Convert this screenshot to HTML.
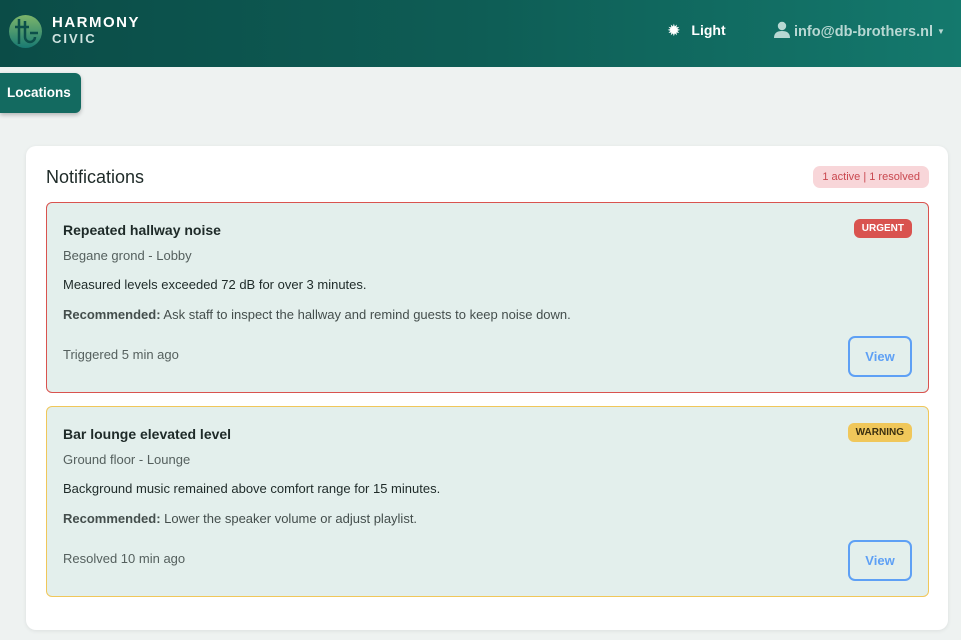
<!DOCTYPE html>
<html><head><style>
*{box-sizing:border-box;margin:0;padding:0}
body{width:961px;height:640px;overflow:hidden;background:#eef2f1;font-family:"Liberation Sans",sans-serif;position:relative;color:#2b3a38}
.hdr{position:absolute;left:0;top:0;width:961px;height:67px;background:linear-gradient(90deg,#0b4c47 0%,#0e5d55 50%,#14796d 100%)}
.logo{position:absolute;left:9px;top:15px;width:33px;height:33px}
.brand{position:absolute;left:52px;top:15px;color:#fff;font-weight:bold;font-size:15px;letter-spacing:1.5px;line-height:16px}
.brand span{display:block;font-size:13px;letter-spacing:2px;color:#cfe3e0;font-weight:bold}
.light{position:absolute;left:668px;top:22px;color:#fff;font-weight:bold;font-size:14px;white-space:nowrap}
.user{position:absolute;left:774px;top:21px;color:#b8d8d3;font-weight:bold;font-size:14.5px;white-space:nowrap}
.loc{position:absolute;left:0;top:73px;width:81px;height:40px;background:#136a60;border-radius:0 6px 6px 0;color:#fff;font-weight:bold;font-size:13.5px;padding:12px 0 0 7px;box-shadow:0 2px 4px rgba(0,0,0,.25)}
.card{position:absolute;left:26px;top:146px;width:922px;height:484px;background:#fff;border-radius:10px;box-shadow:0 1px 4px rgba(0,0,0,.08)}
.ttl{position:absolute;left:20px;top:21px;font-size:18px;color:#1e2a28}
.cnt{position:absolute;right:19px;top:20px;background:#f8d6d9;color:#c9484f;font-size:11px;padding:5px 9px;border-radius:7px}
.al{position:absolute;left:20px;width:883px;height:191px;background:#e3efec;border:1px solid #d9534f;border-radius:6px}
.al.w{border-color:#f0c75a}
.al h3{position:absolute;left:16px;top:19px;font-size:14px;color:#1e2a28}
.al .sub{position:absolute;left:16px;top:45px;font-size:13px;color:#55605e}
.al .m{position:absolute;left:16px;top:74px;font-size:13px;color:#1e2a28}
.al .r{position:absolute;left:16px;top:104px;font-size:13px;color:#444e4c}
.al .t{position:absolute;left:16px;top:144px;font-size:13px;color:#55605e}
.bd{position:absolute;right:16px;top:16px;font-size:10px;font-weight:bold;padding:4px 8px;border-radius:6px}
.v{position:absolute;right:16px;top:133px;width:64px;height:41px;border:2px solid #5ea0f5;border-radius:7px;color:#5ea0f5;font-size:13px;font-weight:bold;text-align:center;line-height:37px}
</style></head><body>
<div class="hdr">
<svg class="logo" viewBox="0 0 33 33"><defs><linearGradient id="g" x1="0" y1="0" x2="0" y2="1"><stop offset="0" stop-color="#7db56a"/><stop offset="1" stop-color="#187a72"/></linearGradient></defs><circle cx="16.5" cy="16.5" r="16.5" fill="url(#g)"/><path d="M10 4v25M16 6v8M6 12h14M16 14v8a5 5 0 0 0 10 0M21 18h8" stroke="#0c4f4a" stroke-width="2.5" fill="none"/></svg>
<div class="brand">HARMONY<span>CIVIC</span></div>
<div class="light">✹&nbsp;&nbsp;&nbsp;Light</div>
<div class="user"><svg width="16" height="17" viewBox="0 0 16 17" style="vertical-align:-2px"><circle cx="8" cy="5" r="4.2" fill="#b8d8d3"/><path d="M0 17c0-5 3-7 8-7s8 2 8 7z" fill="#b8d8d3"/></svg> info@db-brothers.nl <span style="font-size:8px;vertical-align:2px">▼</span></div>
</div>
<div class="loc">Locations</div>
<div class="card">
<div class="ttl">Notifications</div>
<div class="cnt">1 active | 1 resolved</div>
<div class="al" style="top:56px">
<h3>Repeated hallway noise</h3>
<div class="bd" style="background:#d9534f;color:#fff">URGENT</div>
<div class="sub">Begane grond - Lobby</div>
<div class="m">Measured levels exceeded 72 dB for over 3 minutes.</div>
<div class="r"><b>Recommended:</b> Ask staff to inspect the hallway and remind guests to keep noise down.</div>
<div class="t">Triggered 5 min ago</div>
<div class="v">View</div>
</div>
<div class="al w" style="top:260px">
<h3>Bar lounge elevated level</h3>
<div class="bd" style="background:#f0c75a;color:#3a2f10">WARNING</div>
<div class="sub">Ground floor - Lounge</div>
<div class="m">Background music remained above comfort range for 15 minutes.</div>
<div class="r"><b>Recommended:</b> Lower the speaker volume or adjust playlist.</div>
<div class="t">Resolved 10 min ago</div>
<div class="v">View</div>
</div>
</div>
</body></html>
